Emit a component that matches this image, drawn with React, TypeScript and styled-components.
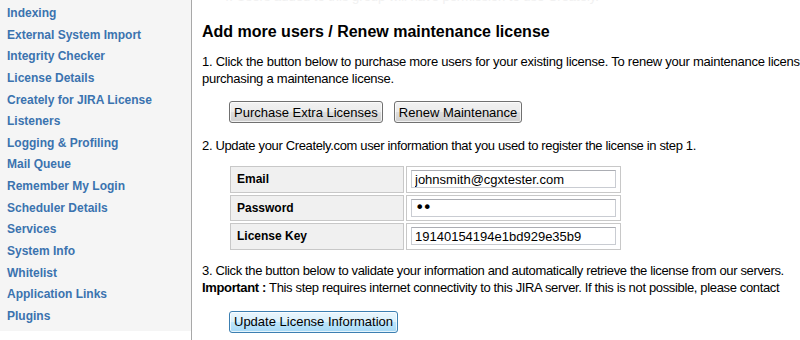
import styled, { createGlobalStyle } from 'styled-components'

const GlobalStyle = createGlobalStyle`
  html, body {
    margin: 0;
    padding: 0;
    background: #fff;
    font-family: "Liberation Sans", Arial, sans-serif;
    overflow: hidden;
  }
`

const Page = styled.div`
  display: flex;
  flex-flow: row nowrap;
  width: 800px;
  height: 340px;
  overflow: hidden;
`

const Sidebar = styled.nav`
  width: 191px;
  flex: 0 0 191px;
  align-self: flex-start;
  background: #f5f5f5;
  padding: 3px 0 3px 0;
  box-sizing: border-box;
`

const NavLink = styled.a`
  display: block;
  height: 21.65px;
  line-height: 21.65px;
  padding-left: 7px;
  font-size: 12px;
  font-weight: bold;
  color: #3b73af;
  text-decoration: none;
  white-space: nowrap;
`

const Main = styled.div`
  flex: 1;
  border-left: 1px solid #a8a8a8;
  padding-left: 10px;
  color: #000;
  font-size: 13px;
  overflow: hidden;
`

const Faded = styled.p`
  margin: -11px 0 0 20px;
  color: #f1f1f1;
  font-size: 13px;
  line-height: 16px;
  white-space: nowrap;
`

const Heading = styled.h2`
  margin: 17px 0 0 0;
  font-size: 16px;
  font-weight: bold;
  line-height: 20px;
`

const Text = styled.p<{ $top?: number; $tight?: boolean }>`
  margin: ${(p) => p.$top ?? 11}px 0 0 0;
  line-height: 17px;
  white-space: nowrap;
  letter-spacing: ${(p) => (p.$tight ? '-0.35px' : '-0.25px')};
`

const ButtonRow = styled.div<{ $top?: number }>`
  display: flex;
  gap: 11px;
  margin: ${(p) => p.$top ?? 10}px 0 0 27px;
`

const Button = styled.button<{ $blue?: boolean }>`
  height: 22px;
  padding: 0 4px;
  font-family: "Liberation Sans", Arial, sans-serif;
  font-size: 13px;
  color: #000;
  border-radius: 3px;
  border: 1px solid ${(p) => (p.$blue ? '#3c7fb1' : '#707070')};
  background: ${(p) =>
    p.$blue
      ? 'linear-gradient(#eaf6fd 0%, #d9f0fc 50%, #bee6fd 51%, #a7d9f5 100%)'
      : 'linear-gradient(#f2f2f2 0%, #ebebeb 50%, #dddddd 51%, #cfcfcf 100%)'};
  box-shadow: inset 0 0 0 1px rgba(255, 255, 255, 0.7);
`

const Table = styled.table`
  margin: 10px 0 0 26px;
  border-spacing: 2px;
`

const Label = styled.td`
  width: 174px;
  height: 26.5px;
  padding: 0 0 0 6px;
  box-sizing: border-box;
  background: #f0f0f0;
  border: 1px solid #c8c8c8;
  font-size: 12px;
  font-weight: bold;
`

const Field = styled.td`
  width: 215px;
  height: 26.5px;
  padding: 0 4px;
  box-sizing: border-box;
  border: 1px solid #c8c8c8;
`

const Input = styled.input<{ $secret?: boolean }>`
  display: block;
  width: 205px;
  height: 18px;
  box-sizing: border-box;
  padding: 0 3px;
  border: 1px solid #c9ccd2;
  border-top-color: #abadb3;
  font-family: ${(p) => (p.$secret ? '"DejaVu Sans", sans-serif' : '"Liberation Sans", Arial, sans-serif')};
  font-size: ${(p) => (p.$secret ? '16px' : '13px')};
  letter-spacing: ${(p) => (p.$secret ? '-2px' : '0')};
  color: #000;
  outline: none;
`

const navItems = [
  'Indexing',
  'External System Import',
  'Integrity Checker',
  'License Details',
  'Creately for JIRA License',
  'Listeners',
  'Logging & Profiling',
  'Mail Queue',
  'Remember My Login',
  'Scheduler Details',
  'Services',
  'System Info',
  'Whitelist',
  'Application Links',
  'Plugins',
]

const fields = [
  { label: 'Email', type: 'text', value: 'johnsmith@cgxtester.com' },
  { label: 'Password', type: 'password', value: 'ab' },
  { label: 'License Key', type: 'text', value: '19140154194e1bd929e35b9' },
]

const App: React.FC = () => {
  return (
    <>
      <GlobalStyle />
      <Page>
        <Sidebar>
          {navItems.map((item) => (
            <NavLink key={item} href="#">
              {item}
            </NavLink>
          ))}
        </Sidebar>
        <Main>
          <Faded>4. Users added to this group will have permission to use Creately.</Faded>
          <Heading>Add more users / Renew maintenance license</Heading>
          <Text>
            1. Click the button below to purchase more users for your existing license. To renew your maintenance license
            <br />
            purchasing a maintenance license.
          </Text>
          <ButtonRow $top={14}>
            <Button>Purchase Extra Licenses</Button>
            <Button>Renew Maintenance</Button>
          </ButtonRow>
          <Text $top={14} $tight>
            2. Update your Creately.com user information that you used to register the license in step 1.
          </Text>
          <Table>
            <tbody>
              {fields.map((f) => (
                <tr key={f.label}>
                  <Label>{f.label}</Label>
                  <Field>
                    <Input type={f.type} $secret={f.type === 'password'} defaultValue={f.value} />
                  </Field>
                </tr>
              ))}
            </tbody>
          </Table>
          <Text $top={10} $tight>
            3. Click the button below to validate your information and automatically retrieve the license from our servers.
            <br />
            <b>Important :</b> This step requires internet connectivity to this JIRA server. If this is not possible, please contact
          </Text>
          <ButtonRow $top={15}>
            <Button $blue>Update License Information</Button>
          </ButtonRow>
        </Main>
      </Page>
    </>
  )
}

export default App
